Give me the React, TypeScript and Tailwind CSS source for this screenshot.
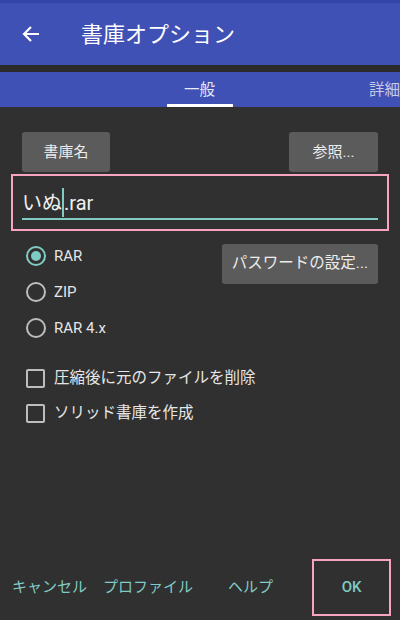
import React from "react";

const font = { fontFamily: "Roboto, 'Noto Sans CJK JP', sans-serif" };

function Radio({ label, checked }: { label: string; checked?: boolean }) {
  return (
    <div className="flex items-center h-[36px]">
      <span
        className={
          "w-[20px] h-[20px] rounded-full border-2 flex items-center justify-center ml-[4px] " +
          (checked ? "border-[#80cbc4]" : "border-[#bdbdbd]")
        }
      >
        {checked && <span className="w-[10px] h-[10px] rounded-full bg-[#80cbc4]" />}
      </span>
      <span className="ml-[8px] text-[15px] text-[#e6e6e6]">{label}</span>
    </div>
  );
}

function Check({ label }: { label: string }) {
  return (
    <div className="flex items-center h-[35px]">
      <span className="w-[19px] h-[19px] rounded-[2px] border-2 border-[#bdbdbd] ml-[4px]" />
      <span className="ml-[9px] text-[15.5px] text-[#e6e6e6]">{label}</span>
    </div>
  );
}

export default function App() {
  return (
    <div className="w-[400px] h-[620px] flex flex-col bg-[#303030] overflow-hidden" style={font}>
      <div className="h-[3px] bg-[#3443a6]" />
      <div className="h-[62px] bg-[#3f51b5] flex items-center">
        <svg className="ml-[22px]" width="18" height="18" viewBox="0 0 18 18" fill="none">
          <path d="M17 9H2.5M9 2L2 9l7 7" stroke="white" strokeWidth="2.2" />
        </svg>
        <span className="ml-[41px] text-[22px] text-white">書庫オプション</span>
      </div>
      <div className="h-[7px] bg-[#2a2a2a]" />
      <div className="h-[35px] bg-[#3f51b5] relative">
        <span className="absolute left-[184px] top-[7px] text-[15.5px] text-[#e8eaf6]">一般</span>
        <span className="absolute left-[369px] top-[7px] text-[15.5px] text-[#c5cae9] whitespace-nowrap">詳細</span>
        <span className="absolute left-[167px] bottom-0 w-[66px] h-[3px] bg-white" />
      </div>

      <div className="flex justify-between px-[22px] mt-[25px]">
        <button className="w-[88px] h-[40px] rounded-[3px] bg-[#5b5b5b] text-[15px] text-[#ececec]">書庫名</button>
        <button className="w-[89px] h-[40px] rounded-[3px] bg-[#5b5b5b] text-[15px] text-[#ececec]">参照...</button>
      </div>

      <div className="mx-[11px] mt-[2px] h-[57px] border-2 border-[#f8a3c0] px-[9px] pt-[12px]">
        <div className="flex items-center h-[29px] text-[20px] text-[#f0f0f0] leading-none">
          <span>いぬ</span>
          <span className="w-[2px] h-[29px] bg-[#80cbc4]" />
          <span>.rar</span>
        </div>
        <div className="h-[2px] bg-[#80cbc4] mt-[1px]" />
      </div>

      <div className="flex justify-between px-[22px] mt-[7px]">
        <div className="flex flex-col">
          <Radio label="RAR" checked />
          <Radio label="ZIP" />
          <Radio label="RAR 4.x" />
        </div>
        <button className="w-[156px] h-[40px] mt-[6px] rounded-[3px] bg-[#5b5b5b] text-[15.5px] text-[#ececec]">
          パスワードの設定...
        </button>
      </div>

      <div className="flex flex-col px-[22px] mt-[15px]">
        <Check label="圧縮後に元のファイルを削除" />
        <Check label="ソリッド書庫を作成" />
      </div>

      <div className="mt-auto mb-[4px] flex items-center h-[57px] text-[15px] text-[#80cbc4]">
        <span className="ml-[12px]">キャンセル</span>
        <span className="ml-[16px]">プロファイル</span>
        <span className="ml-[35px]">ヘルプ</span>
        <span className="ml-[39px] w-[79px] h-[57px] border-2 border-[#f8a3c0] flex items-center justify-center font-medium">
          OK
        </span>
      </div>
    </div>
  );
}
